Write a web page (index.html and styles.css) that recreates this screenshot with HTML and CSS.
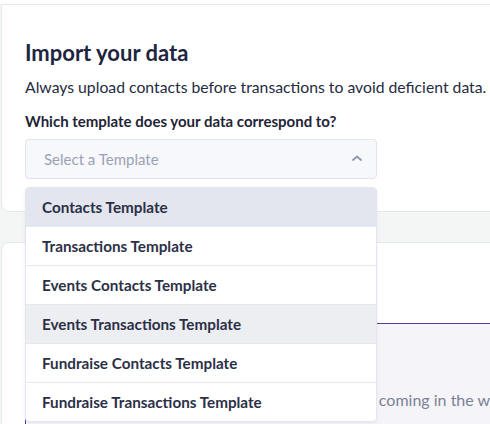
FILE: index.html
```html
<!DOCTYPE html>
<html lang="en">
<head>
<meta charset="utf-8">
<title>Import your data</title>
<link rel="stylesheet" href="styles.css">
</head>
<body>
<div class="topstrip"></div>
<main class="page">
  <section class="card card-import">
    <h1 class="title">Import your data</h1>
    <p class="subtitle">Always upload contacts before transactions to avoid deficient data.</p>
    <label class="label">Which template does your data correspond to?</label>
    <div class="select">
      <div class="select-box">
        <span class="placeholder">Select a Template</span>
        <svg class="chevron" width="10" height="6" viewBox="0 0 10 6"><path d="M1 5 L5 1.5 L9 5" fill="none" stroke="#8e97ab" stroke-width="1.8" stroke-linecap="round" stroke-linejoin="round"/></svg>
      </div>
      <ul class="menu">
        <li class="item selected">Contacts Template</li>
        <li class="item">Transactions Template</li>
        <li class="item">Events Contacts Template</li>
        <li class="item hover">Events Transactions Template</li>
        <li class="item">Fundraise Contacts Template</li>
        <li class="item">Fundraise Transactions Template</li>
      </ul>
    </div>
  </section>
  <section class="card card-info">
    <div class="notice">
      <p class="notice-text">More templates and integrations are currently coming in the way.</p>
    </div>
  </section>
</main>
</body>
</html>
```
FILE: styles.css
```css
html, body {
  margin: 0;
  padding: 0;
}
body {
  background: #f4f5f5;
  font-family: Lato, "Open Sans", sans-serif;
  overflow: hidden;
  height: 424px;
}
.topstrip {
  height: 4px;
  background: #ffffff;
}
.page {
  display: flex;
  flex-direction: column;
  gap: 30px;
  margin-left: 1px;
  width: 520px;
}
.card {
  background: #ffffff;
  border: 1px solid #e3e7ee;
  border-radius: 0 0 0 8px;
  box-sizing: border-box;
}
.card-import {
  padding: 35px 0 32px 23px;
  height: 208px;
}
.title {
  margin: 0;
  font-size: 22px;
  line-height: 26px;
  font-weight: 700;
  color: #1e2540;
}
.subtitle {
  margin: 12px 0 0;
  font-size: 15.75px;
  line-height: 18px;
  color: #262b40;
  white-space: nowrap;
}
.label {
  display: block;
  margin-top: 16px;
  font-size: 15px;
  line-height: 18px;
  font-weight: 700;
  color: #1f2537;
}
.select {
  position: relative;
  width: 352px;
  margin-top: 9px;
}
.select-box {
  height: 40px;
  box-sizing: border-box;
  border: 1px solid #e2e5ee;
  border-radius: 4px;
  background: #f7f8fb;
  display: flex;
  align-items: center;
  justify-content: space-between;
  padding: 0 14px 0 18px;
}
.placeholder {
  font-size: 15px;
  color: #9aa1b4;
}
.chevron {
  display: block;
  margin-top: -2px;
}
.menu {
  position: absolute;
  left: 0;
  top: 48px;
  width: 352px;
  margin: 0;
  padding: 0;
  list-style: none;
  background: #ffffff;
  border: 1px solid #e4e6ef;
  border-radius: 4px;
  box-sizing: border-box;
  box-shadow: 0 2px 4px rgba(30, 37, 64, 0.06);
  overflow: hidden;
  z-index: 5;
}
.item {
  height: 39px;
  box-sizing: border-box;
  padding: 0 16px;
  display: flex;
  align-items: center;
  font-size: 15.25px;
  font-weight: 700;
  color: #2b3047;
  border-bottom: 1px solid #e6e8f0;
}
.item:last-child {
  border-bottom: none;
  height: 38px;
}
.item.selected {
  background: #e3e6ee;
}
.item.hover {
  background: #edeef2;
}
.card-info {
  border-radius: 8px 0 0 8px;
  padding: 80px 0 0 23px;
  height: 260px;
}
.notice {
  border-top: 1px solid #5b3c9a;
  border-left: 1px solid #5b3c9a;
  background: #f5f4f9;
  height: 200px;
  padding: 66px 0 0 28px;
  box-sizing: border-box;
}
.notice-text {
  margin: 0;
  font-size: 16px;
  line-height: 20px;
  color: #7b8193;
  white-space: nowrap;
}
```
